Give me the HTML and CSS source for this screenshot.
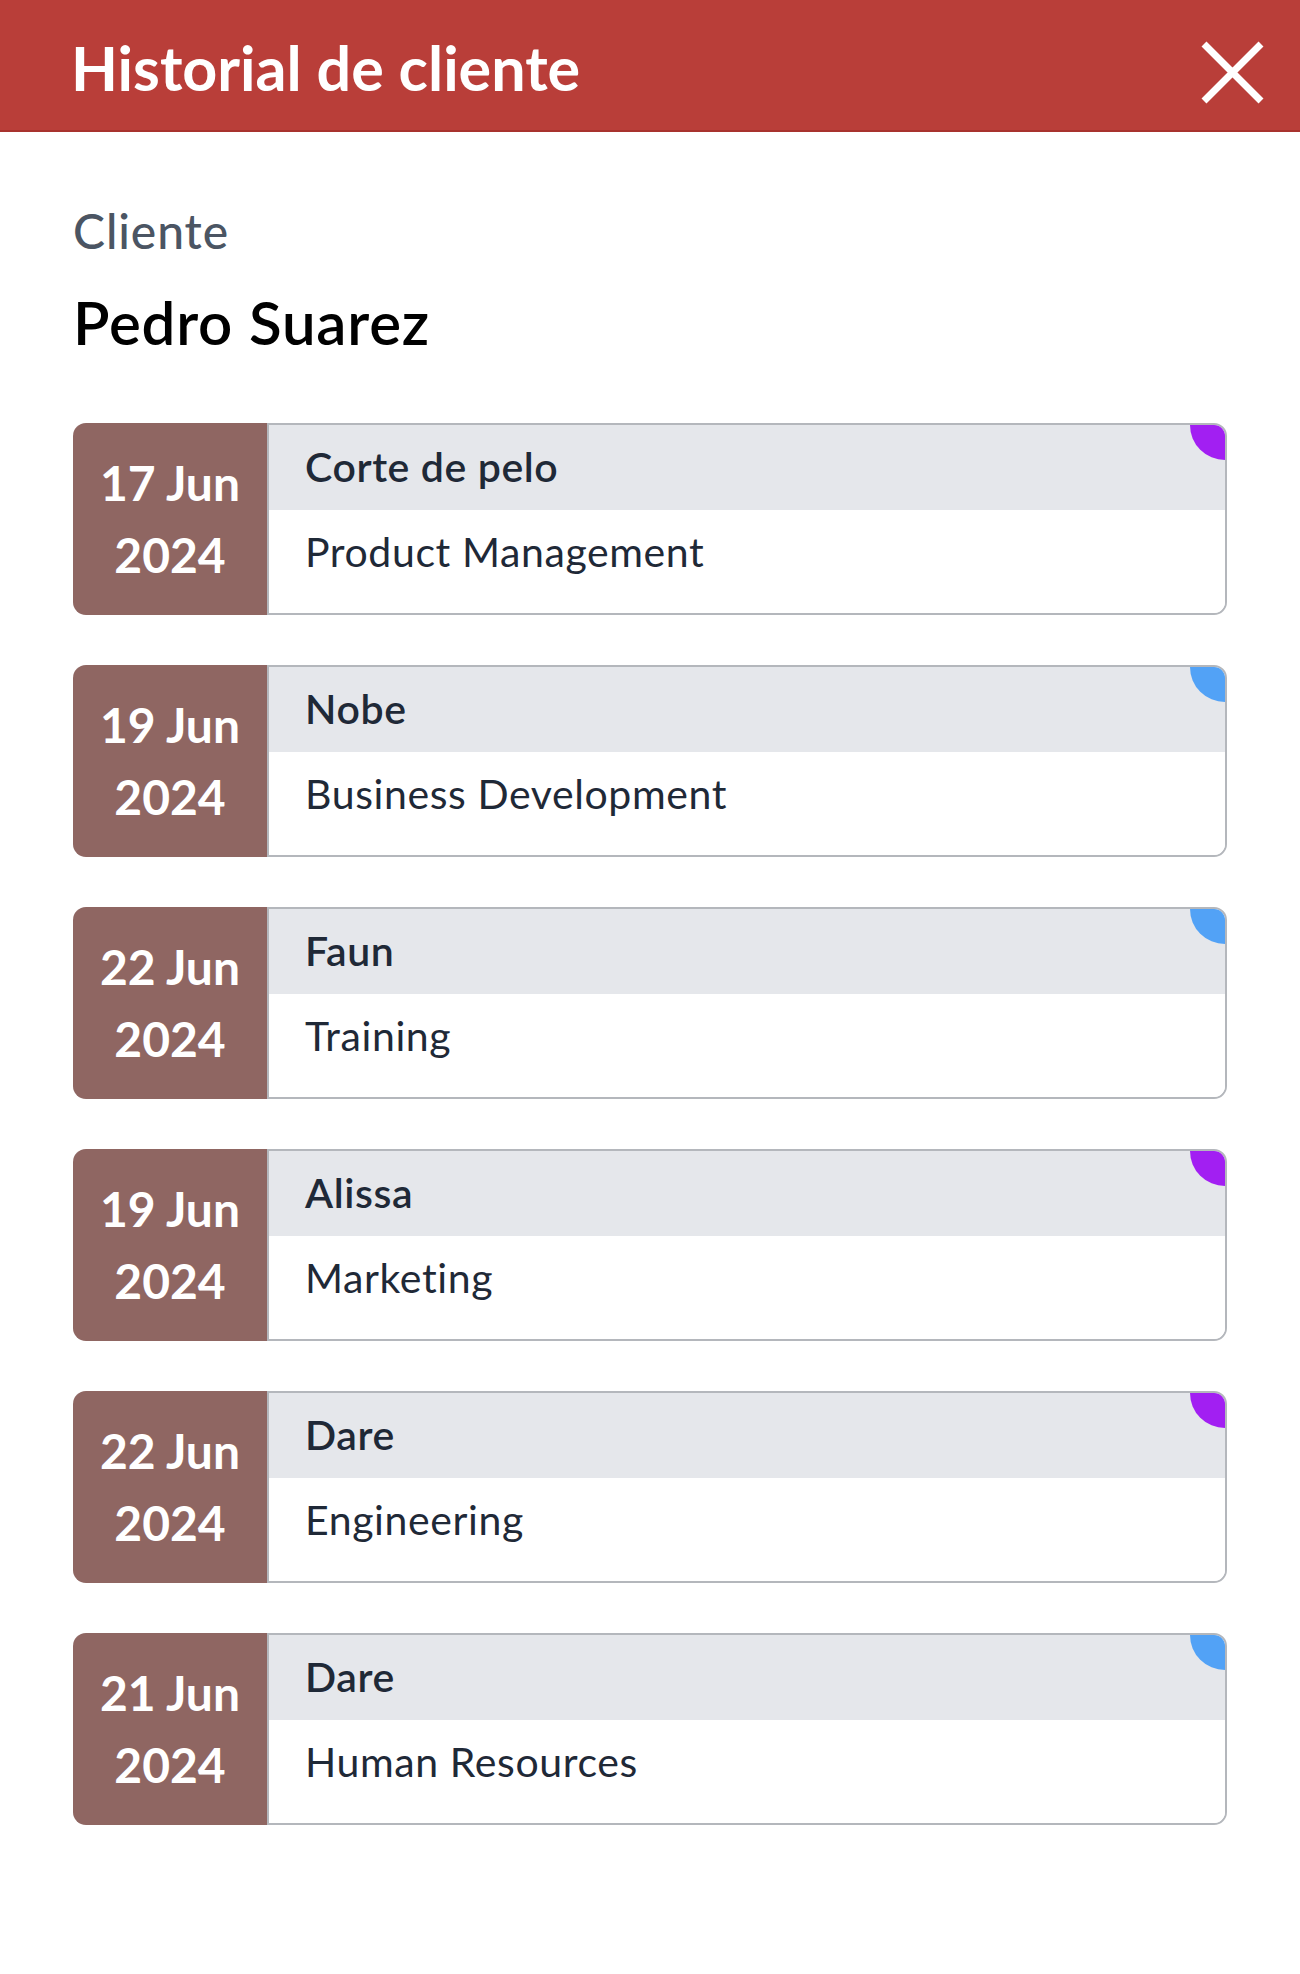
FILE: index.html
```html
<!DOCTYPE html>
<html lang="es">
<head>
<meta charset="utf-8">
<title>Historial de cliente</title>
<link rel="stylesheet" href="styles.css">
</head>
<body>
<header class="topbar">
  <h1 class="topbar-title">Historial de cliente</h1>
  <button class="close-btn" aria-label="Cerrar">
    <svg viewBox="0 0 63 63" width="63" height="63"><path d="M3 3 L60 60 M60 3 L3 60" stroke="#fff" stroke-width="7" fill="none"/></svg>
  </button>
</header>
<main class="content">
  <div class="client-label">Cliente</div>
  <div class="client-name">Pedro Suarez</div>
  <ul class="history">
    <li class="card">
      <div class="card-date"><span>17 Jun</span><span>2024</span></div>
      <div class="card-body">
        <div class="card-title">Corte de pelo</div>
        <div class="card-sub">Product Management</div>
        <span class="badge badge-purple"></span>
      </div>
    </li>
    <li class="card">
      <div class="card-date"><span>19 Jun</span><span>2024</span></div>
      <div class="card-body">
        <div class="card-title">Nobe</div>
        <div class="card-sub">Business Development</div>
        <span class="badge badge-blue"></span>
      </div>
    </li>
    <li class="card">
      <div class="card-date"><span>22 Jun</span><span>2024</span></div>
      <div class="card-body">
        <div class="card-title">Faun</div>
        <div class="card-sub">Training</div>
        <span class="badge badge-blue"></span>
      </div>
    </li>
    <li class="card">
      <div class="card-date"><span>19 Jun</span><span>2024</span></div>
      <div class="card-body">
        <div class="card-title">Alissa</div>
        <div class="card-sub">Marketing</div>
        <span class="badge badge-purple"></span>
      </div>
    </li>
    <li class="card">
      <div class="card-date"><span>22 Jun</span><span>2024</span></div>
      <div class="card-body">
        <div class="card-title">Dare</div>
        <div class="card-sub">Engineering</div>
        <span class="badge badge-purple"></span>
      </div>
    </li>
    <li class="card">
      <div class="card-date"><span>21 Jun</span><span>2024</span></div>
      <div class="card-body">
        <div class="card-title">Dare</div>
        <div class="card-sub">Human Resources</div>
        <span class="badge badge-blue"></span>
      </div>
    </li>
  </ul>
</main>
</body>
</html>
```

FILE: styles.css
```css
* { box-sizing: border-box; }

html, body {
  margin: 0;
  padding: 0;
  background: #ffffff;
}

body {
  font-family: Lato, "Noto Sans", "Liberation Sans", sans-serif;
  color: #1f2937;
}

.topbar {
  height: 132px;
  background: #b93e39;
  border-bottom: 2px solid #a8322e;
  display: flex;
  align-items: center;
  justify-content: space-between;
  padding: 6px 36px 0 71px;
}

.topbar-title {
  margin: 0;
  font-size: 61px;
  font-weight: 700;
  color: #ffffff;
  line-height: 1.2;
}

.close-btn {
  border: 0;
  background: transparent;
  padding: 0;
  margin-top: 8px;
  width: 63px;
  height: 63px;
  display: block;
  cursor: pointer;
}

.close-btn svg { display: block; }

.content {
  padding: 64px 73px 0 73px;
}

.client-label {
  font-size: 48px;
  line-height: 69px;
  letter-spacing: 0.9px;
  color: #4b5563;
  font-weight: 500;
}

.client-name {
  margin-top: 14px;
  font-size: 60px;
  line-height: 87px;
  letter-spacing: 0.8px;
  font-weight: 600;
  color: #000000;
}

.history {
  list-style: none;
  margin: 57px 0 0 0;
  padding: 0;
  display: flex;
  flex-direction: column;
  gap: 50px;
}

.card {
  display: flex;
  height: 192px;
}

.card-date {
  width: 194px;
  flex: 0 0 194px;
  background: #8f6662;
  border-radius: 13px 0 0 13px;
  color: #ffffff;
  font-weight: 700;
  font-size: 48px;
  line-height: 72px;
  display: flex;
  flex-direction: column;
  align-items: center;
  justify-content: center;
}

.card-body {
  position: relative;
  flex: 1;
  border: 2px solid #b4b7bc;
  border-radius: 0 13px 13px 0;
  overflow: hidden;
  display: flex;
  flex-direction: column;
}

.card-title {
  height: 85px;
  background: #e5e7eb;
  padding: 12px 36px 0 36px;
  font-size: 41px;
  line-height: 60px;
  letter-spacing: 0.6px;
  font-weight: 600;
  color: #1f2937;
}

.card-sub {
  flex: 1;
  background: #ffffff;
  padding: 13px 36px 0 36px;
  font-size: 41px;
  line-height: 57px;
  letter-spacing: 0.6px;
  font-weight: 400;
  color: #1f2937;
}

.badge {
  position: absolute;
  top: 0;
  right: 0;
  width: 35px;
  height: 35px;
  border-bottom-left-radius: 100%;
}

.badge-purple { background: #a21ff2; }
.badge-blue { background: #52a2f6; }
```
